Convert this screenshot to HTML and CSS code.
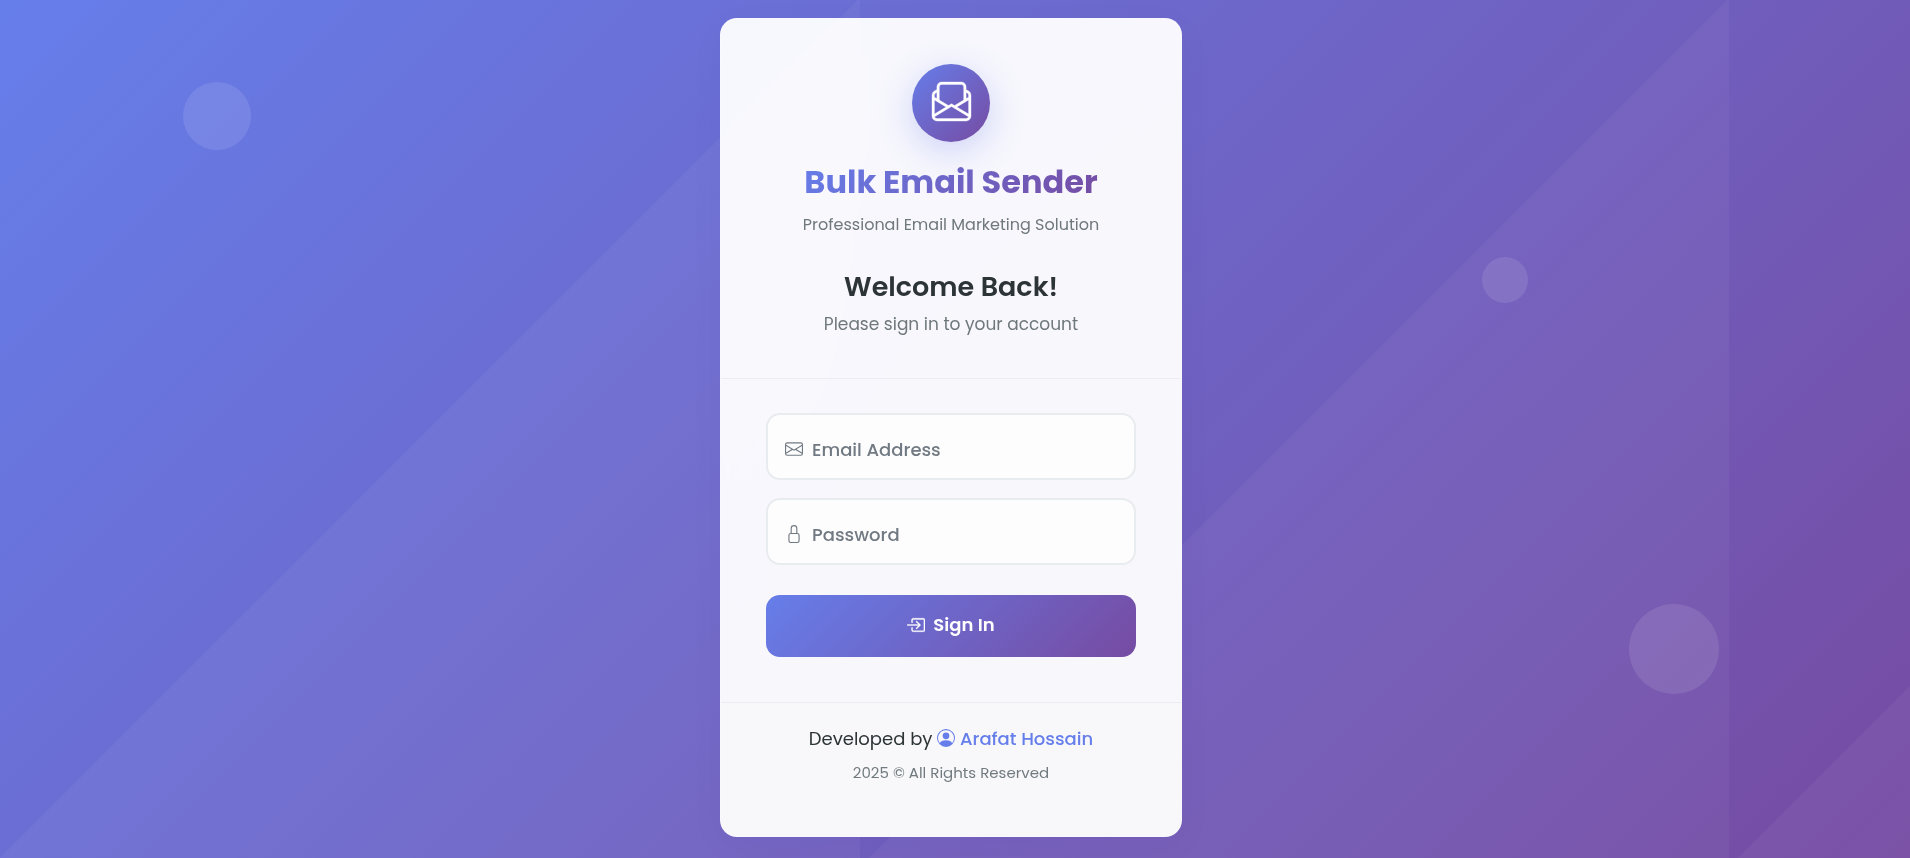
FILE: index.html
```
<!DOCTYPE html>
<html lang="en">
<head>
<meta charset="utf-8">
<title>Bulk Email Sender</title>
<meta name="viewport" content="width=device-width, initial-scale=1">
<link rel="stylesheet" href="styles.css">
</head>
<body class="page">
<svg class="backdrop" aria-hidden="true">
  <defs>
    <pattern id="facets" width="869" height="869" patternUnits="userSpaceOnUse">
      <path d="M0 858L860 -2V869H-11z" fill="#fff" fill-opacity=".04"/>
    </pattern>
  </defs>
  <rect width="100%" height="100%" fill="url(#facets)"/>
</svg>
<div class="bubble bubble-one"></div>
<div class="bubble bubble-two"></div>
<div class="bubble bubble-three"></div>
<main class="card">
  <header class="card-header">
    <div class="logo">
      <svg class="logo-icon" viewBox="0 0 16 16" fill="currentColor" aria-hidden="true"><path d="M4 0a2 2 0 0 0-2 2v1.133l-.941.502A2 2 0 0 0 0 5.400V14a2 2 0 0 0 2 2h12a2 2 0 0 0 2-2V5.400a2 2 0 0 0-1.059-1.765L14 3.133V2a2 2 0 0 0-2-2zm10 4.267.47.25A1 1 0 0 1 15 5.400v.817l-1 .6zm-1 3.150-3.750 2.250L8 8.917l-1.250.750L3 7.417V2a1 1 0 0 1 1-1h8a1 1 0 0 1 1 1zm-11-.600-1-.600v-.817a1 1 0 0 1 .530-.882L2 4.267zm13 .566v5.734l-4.778-2.867zm-.035 6.880A1 1 0 0 1 14 15H2a1 1 0 0 1-.965-.738L8 10.083zM1 13.116V7.383l4.778 2.867z"/></svg>
    </div>
    <h1 class="brand">Bulk Email Sender</h1>
    <p class="tagline">Professional Email Marketing Solution</p>
    <h2 class="welcome">Welcome Back!</h2>
    <p class="lead">Please sign in to your account</p>
  </header>
  <form class="form">
    <div class="field">
      <label class="field-label" for="email">
        <svg class="icon" viewBox="0 0 16 16" fill="currentColor" aria-hidden="true"><path d="M0 4a2 2 0 0 1 2-2h12a2 2 0 0 1 2 2v8a2 2 0 0 1-2 2H2a2 2 0 0 1-2-2zm2-1a1 1 0 0 0-1 1v.217l7 4.200 7-4.200V4a1 1 0 0 0-1-1zm13 2.383-4.708 2.825L15 11.105zm-.034 6.876-5.640-3.471L8 9.583l-1.326-.795-5.640 3.470A1 1 0 0 0 2 13h12a1 1 0 0 0 .966-.741M1 11.105l4.708-2.897L1 5.383z"/></svg>
        Email Address</label>
      <input class="field-input" id="email" type="email">
    </div>
    <div class="field">
      <label class="field-label" for="password">
        <svg class="icon" viewBox="0 0 16 16" fill="currentColor" aria-hidden="true"><path d="M8 1a2 2 0 0 1 2 2v4H6V3a2 2 0 0 1 2-2m3 6V3a3 3 0 0 0-6 0v4a2 2 0 0 0-2 2v5a2 2 0 0 0 2 2h6a2 2 0 0 0 2-2V9a2 2 0 0 0-2-2M5 8h6a1 1 0 0 1 1 1v5a1 1 0 0 1-1 1H5a1 1 0 0 1-1-1V9a1 1 0 0 1 1-1"/></svg>
        Password</label>
      <input class="field-input" id="password" type="password">
    </div>
    <button class="submit" type="submit">
      <svg class="icon icon-bold" viewBox="0 0 16 16" fill="currentColor" aria-hidden="true"><path d="M5 3.500a.5.5 0 0 1 .5-.5h9a.5.5 0 0 1 .5.5v9a.5.5 0 0 1-.5.5h-9a.5.5 0 0 1-.5-.5v-2a.5.5 0 0 0-1 0v2A1.500 1.500 0 0 0 5.500 14h9a1.500 1.500 0 0 0 1.500-1.500v-9A1.500 1.500 0 0 0 14.500 2h-9A1.500 1.500 0 0 0 4 3.500v2a.5.5 0 0 0 1 0z"/><path d="M11.854 8.354a.5.5 0 0 0 0-.708l-3-3a.5.5 0 1 0-.708.708L10.293 7.500H.500a.5.5 0 0 0 0 1h9.793l-2.147 2.146a.5.5 0 0 0 .708.708z"/></svg>
      Sign In</button>
  </form>
  <footer class="card-footer">
    <p class="credit">Developed by <a class="author" href="#"><svg class="icon" viewBox="0 0 16 16" fill="currentColor" aria-hidden="true"><path d="M11 6a3 3 0 1 1-6 0 3 3 0 0 1 6 0"/><path fill-rule="evenodd" d="M0 8a8 8 0 1 1 16 0A8 8 0 0 1 0 8m8-7a7 7 0 0 0-5.468 11.370C3.242 11.226 4.805 10 8 10s4.757 1.225 5.468 2.370A7 7 0 0 0 8 1"/></svg> Arafat Hossain</a></p>
    <p class="rights">2025 © All Rights Reserved</p>
  </footer>
</main>
</body>
</html>
```
FILE: styles.css
```
* {
  box-sizing: border-box;
}

.page {
  position: relative;
  display: flex;
  justify-content: center;
  align-items: center;
  min-height: 100vh;
  margin: 0;
  padding: 16px 8px 20px 0;
  overflow: hidden;
  background: linear-gradient(135deg, #667eea 0%, #764ba2 100%);
  font-family: Poppins, Inter, "Open Sans", sans-serif;
  font-size: 18px;
  color: #2d3436;
}

.backdrop {
  position: absolute;
  inset: 0;
  width: 100%;
  height: 100%;
}

.bubble {
  position: absolute;
  border-radius: 50%;
  background: rgba(255, 255, 255, 0.1);
}

.bubble-one {
  top: 82px;
  left: 183px;
  width: 68px;
  height: 68px;
}

.bubble-two {
  top: 257px;
  right: 382px;
  width: 46px;
  height: 46px;
}

.bubble-three {
  top: 604px;
  right: 191px;
  width: 90px;
  height: 90px;
}

.card {
  position: relative;
  width: 462px;
  max-width: 100%;
  overflow: hidden;
  border: 1px solid rgba(255, 255, 255, 0.2);
  border-radius: 17px;
  background: rgba(255, 255, 255, 0.95);
  box-shadow: 0 9px 36px rgba(31, 38, 135, 0.04);
  backdrop-filter: blur(20px);
}

.card-header {
  display: flex;
  flex-direction: column;
  align-items: center;
  padding: 45px 45px 41px;
  border-bottom: 1px solid #ececf2;
  text-align: center;
}

.logo {
  display: flex;
  align-items: center;
  justify-content: center;
  width: 78px;
  height: 78px;
  margin-bottom: 18px;
  border-radius: 50%;
  background: linear-gradient(135deg, #667eea, #764ba2);
  box-shadow: 0 9px 34px rgba(102, 126, 234, 0.3);
  color: #fff;
}

.logo-icon {
  width: 39px;
  height: 39px;
  margin-bottom: 2px;
  overflow: visible;
  stroke: currentColor;
  stroke-width: 0.15;
}

.brand,
.tagline,
.welcome,
.lead,
.credit,
.rights {
  margin: 0;
}

.brand {
  background: linear-gradient(135deg, #667eea, #764ba2);
  background-clip: text;
  color: transparent;
  font-size: 32px;
  font-weight: 700;
  line-height: 44px;
}

.tagline {
  margin-top: 9px;
  color: #6f787c;
  font-size: 16px;
  line-height: 24px;
}

.welcome {
  margin-top: 31px;
  font-size: 27px;
  font-weight: 600;
  line-height: 38px;
}

.lead {
  margin-top: 5px;
  color: #6f787c;
  font-size: 17px;
  line-height: 26px;
}

.form {
  display: flex;
  flex-direction: column;
  padding: 34px 45px 45px;
}

.field {
  position: relative;
  margin-bottom: 18px;
}

.field-label {
  position: absolute;
  inset: 6px 19px 0;
  display: flex;
  align-items: center;
  gap: 9px;
  color: #717a82;
  font-weight: 500;
  pointer-events: none;
}

.field-input {
  display: block;
  width: 100%;
  height: 67px;
  padding: 24px 18px 8px;
  border: 2px solid #e9ecef;
  border-radius: 14px;
  background: #fdfdfe;
  font: inherit;
}

.icon {
  flex: none;
  width: 18px;
  height: 18px;
}

.icon-bold {
  stroke: currentColor;
  stroke-width: 0.3;
}

.submit {
  display: flex;
  align-items: center;
  justify-content: center;
  gap: 8px;
  height: 62px;
  margin-top: 12px;
  padding: 0 0 2px;
  border: 0;
  border-radius: 14px;
  background: linear-gradient(135deg, #667eea, #764ba2);
  color: #fff;
  font: inherit;
  font-weight: 600;
}

.card-footer {
  padding: 22px 45px 51px;
  border-top: 1px solid #ececf0;
  background: #f8f8fb;
  text-align: center;
}

.credit {
  line-height: 28px;
}

.author {
  color: #667eea;
  font-weight: 500;
  text-decoration: none;
}

.author .icon {
  vertical-align: -2px;
}

.rights {
  margin-top: 8px;
  color: #717a7e;
  font-size: 15px;
  line-height: 24px;
}
```
